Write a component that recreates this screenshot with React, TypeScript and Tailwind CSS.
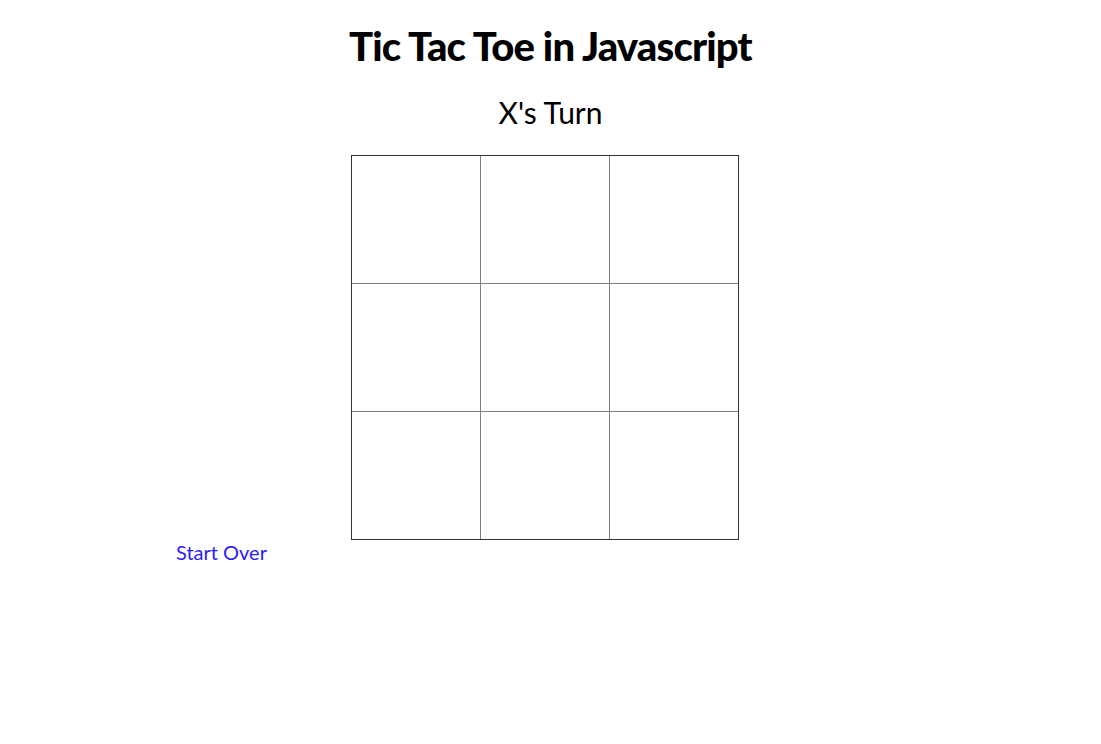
const cells = Array.from({ length: 9 }, (_, i) => i);

export default function App() {
  return (
    <div className="min-h-[744px] bg-white text-black" style={{ fontFamily: "Lato, 'Open Sans', sans-serif" }}>
      <h1 className="pt-[22px] text-center text-[40px] leading-[48px] font-black tracking-[-0.8px]">
        Tic Tac Toe in Javascript
      </h1>
      <h2 className="mt-[24px] text-center text-[30px] leading-[36px] font-normal">X's Turn</h2>
      <div className="mt-[25px] ml-[351px] grid w-[388px] grid-cols-3 gap-px border border-[#333333] bg-[#808080]">
        {cells.map((i) => (
          <div key={i} className="h-[127px] bg-white" />
        ))}
      </div>
      <a href="#" className="ml-[176px] block w-fit text-[20px] leading-[24px] font-normal text-[#2a1bff]">
        Start Over
      </a>
    </div>
  );
}
